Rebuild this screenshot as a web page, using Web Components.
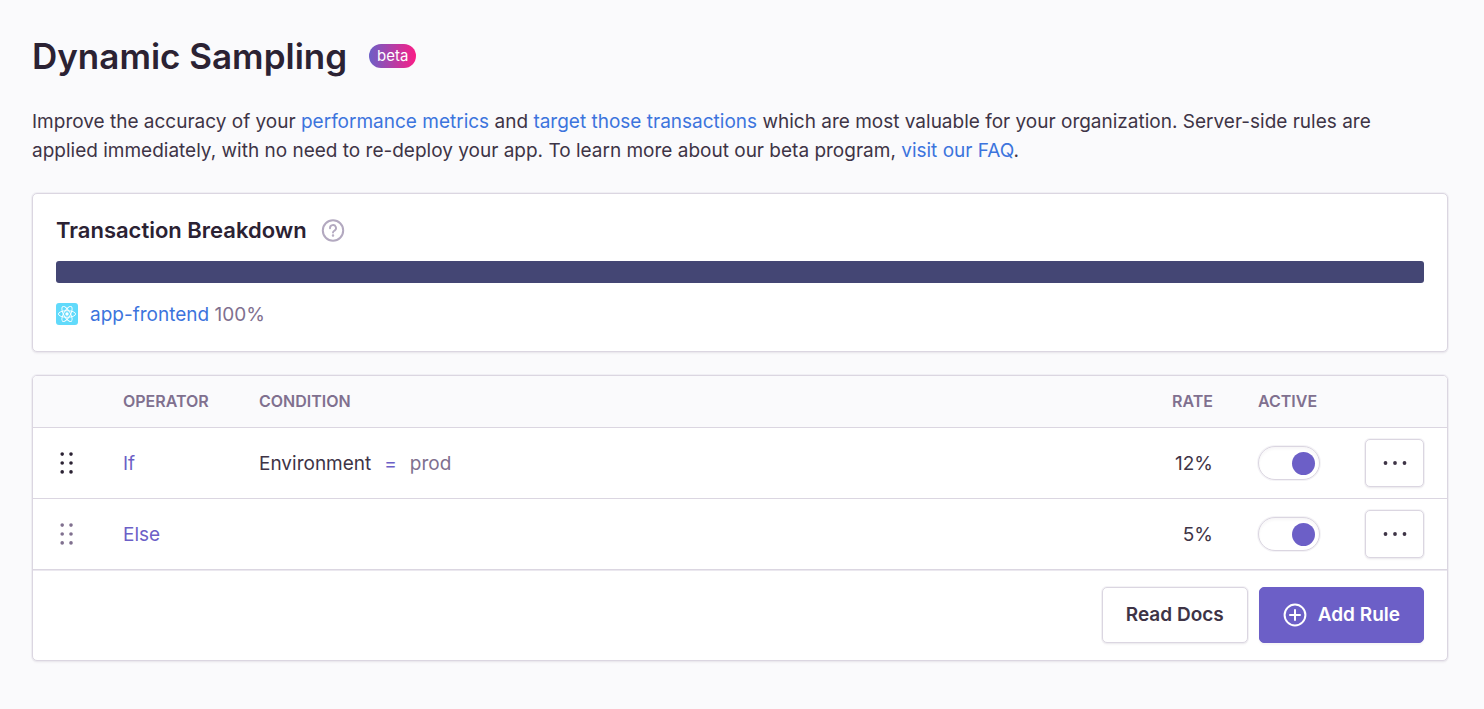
<!DOCTYPE html>
<html lang="en">
<head>
<meta charset="utf-8">
<title>Dynamic Sampling</title>
<style>
  :root {
    --heading: #2b2233;
    --text: #3e3446;
    --muted: #80708f;
    --link: #3c74dd;
    --accent: #6c5fc7;
    --border: #dbd6e1;
    --page: #fafafc;
    --bar: #444674;
    --shadow: 0 2px 2px rgba(43, 34, 51, 0.04);
  }
  body {
    margin: 0;
    background: var(--page);
    color: var(--text);
    font: 400 19px/29px Inter, "Liberation Sans", sans-serif;
  }
</style>
</head>
<body>
<sampling-page></sampling-page>
<script>
function define(name, html, setup) {
  const template = document.createElement('template');
  template.innerHTML = html;
  customElements.define(name, class extends HTMLElement {
    constructor() {
      super();
      this.attachShadow({ mode: 'open' }).append(template.content.cloneNode(true));
    }
    connectedCallback() {
      if (setup) setup(this, this.shadowRoot);
    }
  });
}

define('feature-badge', `
  <style>
    :host {
      display: inline-flex; align-items: center; height: 24px; padding: 0 8px;
      border-radius: 12px; color: #fff; font-size: 15px; line-height: 24px; font-weight: 400;
      background: linear-gradient(90deg, #6c5fc7, #fa1d86);
    }
  </style><slot></slot>`);

define('ui-panel', `
  <style>
    :host {
      display: block; background: #fff; border: 1px solid var(--border);
      border-radius: 5px; box-shadow: 0 0 0 1px rgba(219, 214, 225, .3), var(--shadow); overflow: hidden;
    }
  </style><slot></slot>`);

define('help-icon', `
  <style>:host { display: flex; color: #b3a9c0; } svg { display: block; }</style>
  <svg width="24" height="24" viewBox="0 0 24 24" fill="none" stroke="currentColor" stroke-width="2" stroke-linecap="round" stroke-linejoin="round" role="img" aria-label="Help">
    <circle cx="12" cy="12.500" r="10.200"/>
    <path stroke-width="1.900" d="M9 10.200a3 3 0 1 1 4.600 2.400c-1 .7-1.600 1-1.600 1.900"/>
    <circle cx="12" cy="17.400" r=".5" stroke-width="1.500"/>
  </svg>`);

define('react-icon', `
  <style>:host { display: flex; } svg { display: block; }</style>
  <svg width="22" height="22" viewBox="0 0 22 22" aria-hidden="true">
    <rect width="22" height="22" rx="3" fill="#61dafb"/>
    <g fill="none" stroke="#fff" stroke-width=".9">
      <ellipse cx="11" cy="11" rx="8.600" ry="3.300"/>
      <ellipse cx="11" cy="11" rx="8.600" ry="3.300" transform="rotate(60 11 11)"/>
      <ellipse cx="11" cy="11" rx="8.600" ry="3.300" transform="rotate(120 11 11)"/>
    </g>
    <circle cx="11" cy="11" r="1.700" fill="#fff"/>
  </svg>`);

define('drag-handle', `
  <style>:host { display: flex; color: var(--heading); } :host([disabled]) { color: var(--muted); } svg { display: block; }</style>
  <svg width="22" height="24" viewBox="0 0 22 24" fill="currentColor" aria-hidden="true">
    <circle cx="6.500" cy="2.700" r="1.900"/><circle cx="15.700" cy="2.700" r="1.900"/>
    <circle cx="6.500" cy="12" r="1.900"/><circle cx="15.700" cy="12" r="1.900"/>
    <circle cx="6.500" cy="21.300" r="1.900"/><circle cx="15.700" cy="21.300" r="1.900"/>
  </svg>`);

define('toggle-switch', `
  <style>
    :host { display: flex; }
    input {
      appearance: none; box-sizing: border-box; margin: 0; flex: none; width: 62px; height: 34px; padding: 0 4px;
      border: 1px solid var(--border); border-radius: 17px; background: #fff;
      display: flex; align-items: center; cursor: pointer;
      box-shadow: 0 0 0 1px rgba(219, 214, 225, .3), inset 0 2px 3px rgba(43, 34, 51, .04);
    }
    input::before { content: ""; width: 23px; height: 23px; border-radius: 50%; background: var(--border); }
    input:checked { justify-content: flex-end; }
    input:checked::before { background: var(--accent); }
  </style>
  <input type="checkbox" role="switch" checked>`,
  (host, root) => root.querySelector('input').setAttribute('aria-label', host.getAttribute('label')));

define('ui-button', `
  <style>
    :host { display: flex; }
    button {
      display: flex; align-items: center; justify-content: center; gap: 11px; box-sizing: border-box;
      height: 56px; padding: 0 23px; border: 1px solid var(--border); border-radius: 5px;
      background: #fff; color: var(--text); font: inherit; font-weight: 600; line-height: 24px;
      box-shadow: 0 0 0 1px rgba(219, 214, 225, .3), var(--shadow); cursor: pointer;
    }
    :host([primary]) button { background: var(--accent); border-color: var(--accent); color: #fff; box-shadow: var(--shadow); }
    :host([icon]) button { width: 59px; height: 48px; padding: 0; }
  </style>
  <button type="button"><slot></slot></button>`,
  (host, root) => {
    if (host.hasAttribute('label')) root.querySelector('button').setAttribute('aria-label', host.getAttribute('label'));
  });

define('more-icon', `
  <style>:host { display: flex; } svg { display: block; }</style>
  <svg width="24" height="24" viewBox="0 0 24 24" fill="currentColor" aria-hidden="true">
    <circle cx="2.500" cy="12" r="1.900"/><circle cx="12" cy="12" r="1.900"/><circle cx="21.500" cy="12" r="1.900"/>
  </svg>`);

define('add-icon', `
  <style>:host { display: flex; } svg { display: block; }</style>
  <svg width="24" height="24" viewBox="0 0 24 24" fill="none" stroke="currentColor" stroke-width="2" stroke-linecap="round" aria-hidden="true">
    <circle cx="12" cy="12" r="10.400"/><path d="M12 7v10M7 12h10"/>
  </svg>`);

define('transaction-breakdown', `
  <style>
    :host { display: block; padding: 22px 23px 23px; }
    header, .legend { display: flex; align-items: center; height: 28px; }
    header { gap: 14px; }
    h2 { margin: 0; color: var(--heading); font-size: 22px; line-height: 28px; font-weight: 600; }
    .bar { height: 22px; margin: 17px 0; border-radius: 3px; background: var(--bar); }
    .legend { gap: 12px; }
    a { color: var(--link); text-decoration: none; }
    .share { color: var(--muted); }
  </style>
  <header><h2>Transaction Breakdown</h2><help-icon></help-icon></header>
  <div class="bar"></div>
  <div class="legend"><react-icon></react-icon><div><a href="#app-frontend">app-frontend</a> <span class="share">100%</span></div></div>`);

define('sampling-rules', `
  <style>
    :host { display: block; }
    table { width: 100%; table-layout: fixed; border-collapse: separate; border-spacing: 0; }
    th, td { box-sizing: border-box; padding: 0 23px; border-bottom: 1px solid var(--border); text-align: left; vertical-align: middle; }
    th { height: 52px; padding-bottom: 2px; background: var(--page); color: var(--muted); font-size: 16px; font-weight: 600; line-height: 24px; text-transform: uppercase; }
    td { height: 71px; }
    .grip { width: 67px; } .operator { width: 136px; } .rate { width: 114px; } .active { width: 107px; } .menu { width: 105px; }
    .number { text-align: right; padding-right: 22px; }
    .operator-name { color: var(--accent); }
    .match { display: flex; gap: 13px; }
    .equals { color: var(--accent); }
    .value { color: var(--muted); }
    footer { display: flex; justify-content: flex-end; gap: 11px; padding: 16px 23px 17px; border-top: 1px solid #ebe8ef; }
  </style>
  <table>
    <colgroup><col class="grip"><col class="operator"><col><col class="rate"><col class="active"><col class="menu"></colgroup>
    <thead><tr><th></th><th>Operator</th><th>Condition</th><th class="number">Rate</th><th>Active</th><th></th></tr></thead>
    <tbody>
      <tr>
        <td><drag-handle></drag-handle></td>
        <td class="operator-name">If</td>
        <td><div class="match"><span>Environment</span><span class="equals">=</span><span class="value">prod</span></div></td>
        <td class="number">12%</td>
        <td><toggle-switch label="If rule active"></toggle-switch></td>
        <td><ui-button icon label="If rule actions"><more-icon></more-icon></ui-button></td>
      </tr>
      <tr>
        <td><drag-handle disabled></drag-handle></td>
        <td class="operator-name">Else</td>
        <td></td>
        <td class="number">5%</td>
        <td><toggle-switch label="Else rule active"></toggle-switch></td>
        <td><ui-button icon label="Else rule actions"><more-icon></more-icon></ui-button></td>
      </tr>
    </tbody>
  </table>
  <footer>
    <ui-button>Read Docs</ui-button>
    <ui-button primary><add-icon></add-icon>Add Rule</ui-button>
  </footer>`);

define('sampling-page', `
  <style>
    :host { display: block; padding: 32px 36px 48px 32px; }
    header { display: flex; align-items: center; gap: 22px; height: 48px; }
    h1 { margin: 0; color: var(--heading); font-size: 35px; line-height: 48px; font-weight: 600; }
    p { margin: 27px 0 28px; padding-right: 24px; }
    a { color: var(--link); text-decoration: none; }
    ui-panel + ui-panel { margin-top: 23px; }
  </style>
  <header><h1>Dynamic Sampling</h1><feature-badge>beta</feature-badge></header>
  <p><span>Improve the accuracy of your </span><a href="#metrics">performance metrics</a> and <a href="#transactions">target those transactions</a><span> which are most valuable for your organization. Server-side rules are </span><span>applied immediately, with no need to re-deploy your app. To learn more about our beta program, </span><a href="#faq">visit our FAQ</a>.</p>
  <ui-panel><transaction-breakdown></transaction-breakdown></ui-panel>
  <ui-panel><sampling-rules></sampling-rules></ui-panel>`);
</script>
</body>
</html>
